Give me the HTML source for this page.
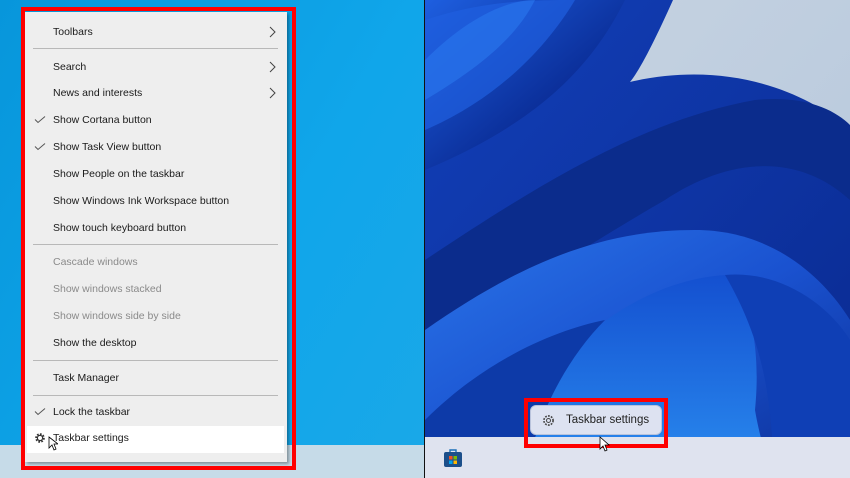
<!DOCTYPE html>
<html><head><meta charset="utf-8"><style>
*{margin:0;padding:0;box-sizing:border-box}
body{width:850px;height:478px;overflow:hidden;position:relative;font-family:"Liberation Sans",sans-serif;background:#111}
.left{position:absolute;left:0;top:0;width:424px;height:478px;background:linear-gradient(120deg,#0796db 0%,#10a6ea 60%,#1aa8e8 100%)}
.ltb{position:absolute;left:0;top:445px;width:424px;height:33px;background:#c6dbe8}
.redL{position:absolute;left:21px;top:7px;width:275px;height:463px;border:4px solid #f00}
.menu{position:absolute;left:25px;top:12px;width:262px;height:450px;background:#eeeeee;box-shadow:2px 2px 3px rgba(0,0,0,.35)}
.it{position:absolute;left:28px;font-size:10.5px;color:#1a1a1a;transform:translateY(-50%)}
.dis{color:#8a8a8a}
.sep{position:absolute;left:8px;width:245px;height:1px;background:#b8b8b8}
.chev{position:absolute;left:244px;transform:translateY(-50%)}
.chk{position:absolute;left:9px;transform:translateY(-50%)}
.hl{position:absolute;left:2px;top:414px;width:257px;height:27px;background:#fff}
.right{position:absolute;left:425px;top:0;width:425px;height:478px}
.rtb{position:absolute;left:425px;top:437px;width:425px;height:41px;background:#dfe3ef}
.btn{position:absolute;left:530px;top:405px;width:132px;height:30px;border-radius:6px;background:#dde2f1;border:1px solid #b9c3dc;font-size:11.5px;color:#222}
.redR{position:absolute;left:524px;top:398px;width:144px;height:50px;border:4px solid #f00}
</style></head><body>
<div class="left"></div>
<div class="ltb"></div>
<div class="menu">
 <div class="hl"></div>
 <div class="it" style="top:20px">Toolbars</div>
 <svg class="chev" style="top:20px" width="8" height="12"><path d="M1 1l5 5-5 5" stroke="#444" fill="none"/></svg>
 <div class="sep" style="top:36px"></div>
 <div class="it" style="top:55px">Search</div>
 <svg class="chev" style="top:55px" width="8" height="12"><path d="M1 1l5 5-5 5" stroke="#444" fill="none"/></svg>
 <div class="it" style="top:81px">News and interests</div>
 <svg class="chev" style="top:81px" width="8" height="12"><path d="M1 1l5 5-5 5" stroke="#444" fill="none"/></svg>
 <svg class="chk" style="top:108px" width="12" height="9"><path d="M1 4l3 3 7-6" stroke="#555" fill="none"/></svg>
 <div class="it" style="top:108px">Show Cortana button</div>
 <svg class="chk" style="top:135px" width="12" height="9"><path d="M1 4l3 3 7-6" stroke="#555" fill="none"/></svg>
 <div class="it" style="top:135px">Show Task View button</div>
 <div class="it" style="top:162px">Show People on the taskbar</div>
 <div class="it" style="top:189px">Show Windows Ink Workspace button</div>
 <div class="it" style="top:216px">Show touch keyboard button</div>
 <div class="sep" style="top:232px"></div>
 <div class="it dis" style="top:250px">Cascade windows</div>
 <div class="it dis" style="top:277px">Show windows stacked</div>
 <div class="it dis" style="top:304px">Show windows side by side</div>
 <div class="it" style="top:331px">Show the desktop</div>
 <div class="sep" style="top:348px"></div>
 <div class="it" style="top:366px">Task Manager</div>
 <div class="sep" style="top:383px"></div>
 <svg class="chk" style="top:400px" width="12" height="9"><path d="M1 4l3 3 7-6" stroke="#555" fill="none"/></svg>
 <div class="it" style="top:400px">Lock the taskbar</div>
 <svg style="position:absolute;left:9px;top:420px" width="12" height="12" viewBox="0 0 12 12"><circle cx="6" cy="6" r="3.6" fill="none" stroke="#333" stroke-width="2.4" stroke-dasharray="1.6 1.2"/><circle cx="6" cy="6" r="2.6" fill="none" stroke="#333" stroke-width="1.2"/></svg>
 <div class="it" style="top:426px">Taskbar settings</div>
 <svg style="position:absolute;left:23px;top:424px" width="10" height="15"><path d="M1 1v11l3-3 2 5 2-1-2-5h4z" fill="#fff" stroke="#000" stroke-width=".8"/></svg>
</div>
<div class="redL"></div>

<svg class="right" width="425" height="478" viewBox="0 0 425 478">
 <defs>
  <linearGradient id="bg" x1="0" y1="0" x2="1" y2="1"><stop offset="0" stop-color="#c9d5e2"/><stop offset="1" stop-color="#b4c6dc"/></linearGradient>
  <linearGradient id="g1" x1="0" y1="0" x2="1" y2="1"><stop offset="0" stop-color="#1e5fe0"/><stop offset=".6" stop-color="#0b2f9a"/><stop offset="1" stop-color="#08207a"/></linearGradient>
  <linearGradient id="g2" x1="0" y1="0" x2="1" y2="1"><stop offset="0" stop-color="#123fb8"/><stop offset="1" stop-color="#0a2a90"/></linearGradient>
  <linearGradient id="g3" x1="0" y1="0" x2="1" y2="1"><stop offset="0" stop-color="#2a74e8"/><stop offset=".5" stop-color="#1a52d0"/><stop offset="1" stop-color="#0c2f96"/></linearGradient>
  <linearGradient id="g4" x1="0" y1="0" x2="0" y2="1"><stop offset="0" stop-color="#1450d0"/><stop offset="1" stop-color="#2a8cf0"/></linearGradient>
 </defs>
 <rect width="425" height="478" fill="url(#bg)"/>
 <path d="M0 0H248C230 40 215 70 205 82C300 60 380 90 425 130V478H0Z" fill="url(#g2)"/>
 <path d="M0 0H200C170 60 120 120 0 170Z" fill="url(#g1)"/>
 <path d="M0 20C60 0 110 0 150 0C120 50 70 100 0 130Z" fill="#1f5fe0" opacity=".7"/>
 <path d="M0 60C40 20 80 0 110 0C90 40 50 70 0 100Z" fill="#2a78ee" opacity=".6"/>
 <path d="M0 260C120 180 220 120 330 100C380 95 410 110 425 125V200C370 150 300 160 240 200C170 240 80 300 0 340Z" fill="#0b2c8c"/>
 <path d="M0 330C100 260 180 230 270 230C350 230 400 280 425 320V478H0Z" fill="url(#g3)"/>
 <path d="M60 478C120 340 220 280 300 275C330 300 335 360 330 410C335 440 345 470 350 478Z" fill="url(#g4)"/>
 <path d="M0 420C60 360 130 330 180 320C140 360 110 420 100 478H0Z" fill="#0d3aa8"/>
 <path d="M300 275C350 270 400 300 425 340V478H350C345 430 350 360 300 275Z" fill="#0f3fb5"/>
</svg>
<div class="rtb"></div>
<div class="btn"><svg style="position:absolute;left:11px;top:8px" width="13" height="13" viewBox="0 0 13 13"><circle cx="6.5" cy="6.5" r="4.6" fill="none" stroke="#444" stroke-width="1.6" stroke-dasharray="1.8 1.2"/><circle cx="6.5" cy="6.5" r="2" fill="none" stroke="#444" stroke-width="1"/></svg><span style="position:absolute;left:35px;top:8px">Taskbar settings</span></div>
<div class="redR"></div>
<svg style="position:absolute;left:599px;top:436px" width="12" height="17"><path d="M1 1v12l3-3 2 5 2-1-2-5h4z" fill="#fff" stroke="#000" stroke-width=".8"/></svg>
<svg style="position:absolute;left:443px;top:448px" width="20" height="20" viewBox="0 0 20 20"><path d="M7 4V2h6v2" fill="none" stroke="#1a6fb8" stroke-width="1.4"/><rect x="1" y="4" width="18" height="15" rx="2" fill="#1c4f8a"/><rect x="6" y="8" width="3.5" height="3.5" fill="#f25022"/><rect x="10.5" y="8" width="3.5" height="3.5" fill="#7fba00"/><rect x="6" y="12.5" width="3.5" height="3.5" fill="#00a4ef"/><rect x="10.5" y="12.5" width="3.5" height="3.5" fill="#ffb900"/></svg>
</body></html>
